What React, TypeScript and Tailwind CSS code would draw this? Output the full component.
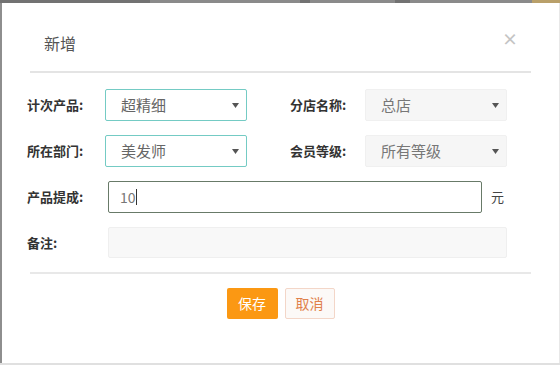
import React from "react";

const font = { fontFamily: '"Microsoft YaHei", "Noto Sans CJK SC", "Noto Sans", sans-serif' };

function Caret() {
  return (
    <svg width="7" height="5" viewBox="0 0 7 5" className="shrink-0">
      <path d="M0 0 L7 0 L3.5 5 Z" fill="#555" />
    </svg>
  );
}

function Select({ value, active }: { value: string; active?: boolean }) {
  return (
    <div
      className={
        "flex items-center justify-between w-[142px] h-[32px] pl-[15px] pr-[7px] rounded-[2px] text-[15px] " +
        (active
          ? "border border-[#74cbc4] bg-white text-[#666]"
          : "border border-[#f0f0f0] bg-[#f6f6f6] text-[#777]")
      }
    >
      <span>{value}</span>
      <Caret />
    </div>
  );
}

function Label({ text, w }: { text: string; w: string }) {
  return (
    <div className={"text-[13px] font-bold text-[#333] shrink-0 " + w}>{text}</div>
  );
}

export default function App() {
  return (
    <div className="w-[560px] h-[365px] flex flex-col bg-[#e6e6e6] overflow-hidden" style={font}>
      <div className="h-[3px] bg-[#727272] shrink-0 flex">
        <div className="ml-[150px] w-[160px] h-full bg-[#8a8a8a]" />
        <div className="ml-[10px] w-[90px] h-full bg-[#8a8a8a]" />
        <div className="ml-[15px] w-[130px] h-full bg-[#8a8a8a]" />
        <div className="ml-auto w-[30px] h-full bg-[#b9a06a]" />
      </div>
      <div className="flex flex-1 min-h-0">
        <div className="w-[2px] bg-[#8e8e8e] shrink-0" />
        <div className="flex-1 bg-white flex flex-col">
          {/* header */}
          <div className="relative pt-[29px] pl-[42px] h-[68px]">
            <div className="text-[16px] leading-[22px] text-[#555]">新增</div>
            <div className="absolute right-[41px] top-[27px] text-[16px] font-bold text-[#c4c4c4] leading-none">×</div>
          </div>
          <div className="mx-[28px] w-[501px] h-[2px] bg-[#e4e4e4]" />
          {/* form */}
          <div className="pl-[25px] pt-[16px] flex flex-col">
            <div className="flex items-center h-[32px]">
              <Label text="计次产品:" w="w-[78px]" />
              <Select value="超精细" active />
              <Label text="分店名称:" w="w-[75px] ml-[43px]" />
              <Select value="总店" />
            </div>
            <div className="flex items-center h-[32px] mt-[14px]">
              <Label text="所在部门:" w="w-[78px]" />
              <Select value="美发师" active />
              <Label text="会员等级:" w="w-[75px] ml-[43px]" />
              <Select value="所有等级" />
            </div>
            <div className="flex items-center h-[32px] mt-[14px]">
              <Label text="产品提成:" w="w-[81px]" />
              <div className="flex items-center w-[374px] h-[32px] border border-[#687a68] rounded-[2px] pl-[11px] text-[14px] text-[#777]">
                <span>10</span>
                <span className="inline-block w-[1px] h-[16px] bg-[#333]" />
              </div>
              <div className="ml-[9px] text-[13px] text-[#444]">元</div>
            </div>
            <div className="flex items-center h-[31px] mt-[14px]">
              <Label text="备注:" w="w-[81px]" />
              <div className="w-[399px] h-[31px] border border-[#efefef] bg-[#f8f8f8] rounded-[2px]" />
            </div>
          </div>
          <div className="mx-[28px] w-[501px] h-[2px] bg-[#e8e8e8] mt-[14px]" />
          <div className="flex justify-center gap-[7px] mt-[14px]">
            <div className="w-[51px] h-[31px] rounded-[2px] bg-[#fb9813] text-white text-[14px] flex items-center justify-center">
              保存
            </div>
            <div className="w-[50px] h-[31px] rounded-[2px] border border-[#f3d6c8] bg-[#fcf9f7] text-[#e0804a] text-[14px] flex items-center justify-center">
              取消
            </div>
          </div>
        </div>
        <div className="w-[3px] bg-[#e8e8e8] shrink-0" />
      </div>
      <div className="h-[2px] bg-[#e0e0e0] shrink-0" />
    </div>
  );
}
